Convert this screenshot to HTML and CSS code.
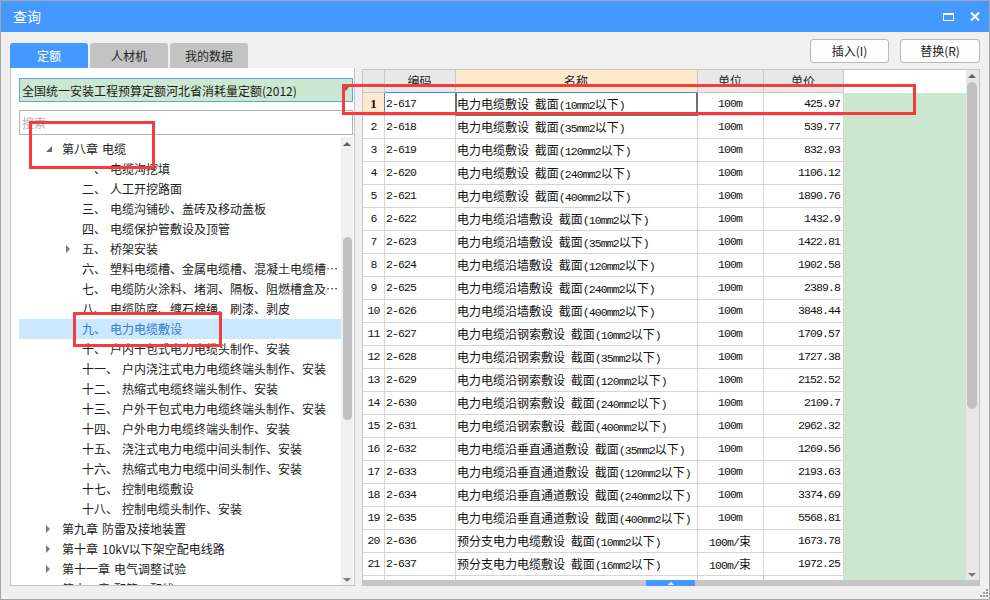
FILE: index.html
```html
<!DOCTYPE html>
<html lang="zh">
<head>
<meta charset="utf-8">
<title>查询</title>
<link rel="stylesheet" href="styles.css">
</head>
<body>
<div class="win">
  <div class="titlebar">
    <span class="title">查询</span>
    <svg class="tb-max" width="11" height="8" viewBox="0 0 11 8"><rect x="0" y="0" width="11" height="2" fill="#fff"/><rect x="0.5" y="1.5" width="10" height="6" fill="none" stroke="#fff" stroke-width="1"/></svg>
    <svg class="tb-close" width="10" height="9" viewBox="0 0 10 9"><path d="M1 0.5 L9 8.5 M9 0.5 L1 8.5" stroke="#fff" stroke-width="2" fill="none"/></svg>
  </div>

  <div class="toolbar">
    <div class="tabs">
      <div class="tab on">定额</div>
      <div class="tab">人材机</div>
      <div class="tab">我的数据</div>
    </div>
    <div class="btns">
      <div class="btn">插入(I)</div>
      <div class="btn wide">替换(R)</div>
    </div>
  </div>

  <div class="main">
    <div class="left">
      <div class="dropdown"><span>全国统一安装工程预算定额河北省消耗量定额(2012)</span><i class="dd-arrow"></i></div>
      <div class="search">搜索</div>
      <div class="tree-wrap">
        <div class="tree">
          <div class="row l1"><i class="tg open"></i>第八章 电缆</div>
          <div class="row l2"><i class="tg"></i>一、 电缆沟挖填</div>
          <div class="row l2"><i class="tg"></i>二、 人工开挖路面</div>
          <div class="row l2"><i class="tg"></i>三、 电缆沟铺砂、盖砖及移动盖板</div>
          <div class="row l2"><i class="tg"></i>四、 电缆保护管敷设及顶管</div>
          <div class="row l2"><i class="tg closed"></i>五、 桥架安装</div>
          <div class="row l2"><i class="tg"></i>六、 塑料电缆槽、金属电缆槽、混凝土电缆槽安装</div>
          <div class="row l2"><i class="tg"></i>七、 电缆防火涂料、堵洞、隔板、阻燃槽盒及防火包安装</div>
          <div class="row l2"><i class="tg"></i>八、 电缆防腐、缠石棉绳、刷漆、剥皮</div>
          <div class="row l2 sel"><i class="tg"></i>九、 电力电缆敷设</div>
          <div class="row l2"><i class="tg"></i>十、 户内干包式电力电缆头制作、安装</div>
          <div class="row l2"><i class="tg"></i>十一、 户内浇注式电力电缆终端头制作、安装</div>
          <div class="row l2"><i class="tg"></i>十二、 热缩式电缆终端头制作、安装</div>
          <div class="row l2"><i class="tg"></i>十三、 户外干包式电力电缆终端头制作、安装</div>
          <div class="row l2"><i class="tg"></i>十四、 户外电力电缆终端头制作、安装</div>
          <div class="row l2"><i class="tg"></i>十五、 浇注式电力电缆中间头制作、安装</div>
          <div class="row l2"><i class="tg"></i>十六、 热缩式电力电缆中间头制作、安装</div>
          <div class="row l2"><i class="tg"></i>十七、 控制电缆敷设</div>
          <div class="row l2"><i class="tg"></i>十八、 控制电缆头制作、安装</div>
          <div class="row l1"><i class="tg closed"></i>第九章 防雷及接地装置</div>
          <div class="row l1"><i class="tg closed"></i>第十章 10kV以下架空配电线路</div>
          <div class="row l1"><i class="tg closed"></i>第十一章 电气调整试验</div>
          <div class="row l1"><i class="tg closed"></i>第十二章 配管、配线</div>
        </div>
        <div class="lscroll">
          <i class="sa up"></i>
          <div class="lthumb"></div>
          <i class="sa down"></i>
        </div>
      </div>
    </div>

    <div class="right">
      <div class="gridarea">
        <div class="table">
          <div class="c h"></div>
          <div class="c h b">编码</div>
          <div class="c h nm b">名称</div>
          <div class="c h">单位</div>
          <div class="c h">单价</div>

          <div class="c num cur">1</div><div class="c code curc">2-617</div><div class="c nm curn">电力电缆敷设 截面<span class="m">(10mm2</span>以下<span class="m">)</span></div><div class="c unit">100m</div><div class="c price">425.97</div>
          <div class="c num">2</div><div class="c code">2-618</div><div class="c nm">电力电缆敷设 截面<span class="m">(35mm2</span>以下<span class="m">)</span></div><div class="c unit">100m</div><div class="c price">539.77</div>
          <div class="c num">3</div><div class="c code">2-619</div><div class="c nm">电力电缆敷设 截面<span class="m">(120mm2</span>以下<span class="m">)</span></div><div class="c unit">100m</div><div class="c price">832.93</div>
          <div class="c num">4</div><div class="c code">2-620</div><div class="c nm">电力电缆敷设 截面<span class="m">(240mm2</span>以下<span class="m">)</span></div><div class="c unit">100m</div><div class="c price">1106.12</div>
          <div class="c num">5</div><div class="c code">2-621</div><div class="c nm">电力电缆敷设 截面<span class="m">(400mm2</span>以下<span class="m">)</span></div><div class="c unit">100m</div><div class="c price">1890.76</div>
          <div class="c num">6</div><div class="c code">2-622</div><div class="c nm">电力电缆沿墙敷设 截面<span class="m">(10mm2</span>以下<span class="m">)</span></div><div class="c unit">100m</div><div class="c price">1432.9</div>
          <div class="c num">7</div><div class="c code">2-623</div><div class="c nm">电力电缆沿墙敷设 截面<span class="m">(35mm2</span>以下<span class="m">)</span></div><div class="c unit">100m</div><div class="c price">1422.81</div>
          <div class="c num">8</div><div class="c code">2-624</div><div class="c nm">电力电缆沿墙敷设 截面<span class="m">(120mm2</span>以下<span class="m">)</span></div><div class="c unit">100m</div><div class="c price">1902.58</div>
          <div class="c num">9</div><div class="c code">2-625</div><div class="c nm">电力电缆沿墙敷设 截面<span class="m">(240mm2</span>以下<span class="m">)</span></div><div class="c unit">100m</div><div class="c price">2389.8</div>
          <div class="c num">10</div><div class="c code">2-626</div><div class="c nm">电力电缆沿墙敷设 截面<span class="m">(400mm2</span>以下<span class="m">)</span></div><div class="c unit">100m</div><div class="c price">3848.44</div>
          <div class="c num">11</div><div class="c code">2-627</div><div class="c nm">电力电缆沿钢索敷设 截面<span class="m">(10mm2</span>以下<span class="m">)</span></div><div class="c unit">100m</div><div class="c price">1709.57</div>
          <div class="c num">12</div><div class="c code">2-628</div><div class="c nm">电力电缆沿钢索敷设 截面<span class="m">(35mm2</span>以下<span class="m">)</span></div><div class="c unit">100m</div><div class="c price">1727.38</div>
          <div class="c num">13</div><div class="c code">2-629</div><div class="c nm">电力电缆沿钢索敷设 截面<span class="m">(120mm2</span>以下<span class="m">)</span></div><div class="c unit">100m</div><div class="c price">2152.52</div>
          <div class="c num">14</div><div class="c code">2-630</div><div class="c nm">电力电缆沿钢索敷设 截面<span class="m">(240mm2</span>以下<span class="m">)</span></div><div class="c unit">100m</div><div class="c price">2109.7</div>
          <div class="c num">15</div><div class="c code">2-631</div><div class="c nm">电力电缆沿钢索敷设 截面<span class="m">(400mm2</span>以下<span class="m">)</span></div><div class="c unit">100m</div><div class="c price">2962.32</div>
          <div class="c num">16</div><div class="c code">2-632</div><div class="c nm">电力电缆沿垂直通道敷设 截面<span class="m">(35mm2</span>以下<span class="m">)</span></div><div class="c unit">100m</div><div class="c price">1269.56</div>
          <div class="c num">17</div><div class="c code">2-633</div><div class="c nm">电力电缆沿垂直通道敷设 截面<span class="m">(120mm2</span>以下<span class="m">)</span></div><div class="c unit">100m</div><div class="c price">2193.63</div>
          <div class="c num">18</div><div class="c code">2-634</div><div class="c nm">电力电缆沿垂直通道敷设 截面<span class="m">(240mm2</span>以下<span class="m">)</span></div><div class="c unit">100m</div><div class="c price">3374.69</div>
          <div class="c num">19</div><div class="c code">2-635</div><div class="c nm">电力电缆沿垂直通道敷设 截面<span class="m">(400mm2</span>以下<span class="m">)</span></div><div class="c unit">100m</div><div class="c price">5568.81</div>
          <div class="c num">20</div><div class="c code">2-636</div><div class="c nm">预分支电力电缆敷设 截面<span class="m">(10mm2</span>以下<span class="m">)</span></div><div class="c unit">100m/<span class="zh">束</span></div><div class="c price">1673.78</div>
          <div class="c num">21</div><div class="c code">2-637</div><div class="c nm">预分支电力电缆敷设 截面<span class="m">(16mm2</span>以下<span class="m">)</span></div><div class="c unit">100m/<span class="zh">束</span></div><div class="c price">1972.25</div>
          <div class="c num"></div><div class="c code"></div><div class="c nm"></div><div class="c unit"></div><div class="c price"></div>
        </div>
        <div class="filler"><div class="fh"></div><div class="fg"></div></div>
        <div class="vs">
          <i class="sa up"></i>
          <div class="vthumb"></div>
          <i class="sa down"></i>
        </div>
      </div>
      <div class="hs"><div class="hthumb"><i class="hup"></i></div></div>
    </div>
  </div>

  <div class="ann a1"></div>
  <div class="ann a2"></div>
  <div class="ann a3"></div>
  <svg class="grip" width="10" height="10" viewBox="0 0 10 10"><g fill="#9a9a9a"><rect x="7" y="1" width="2" height="2"/><rect x="4" y="4" width="2" height="2"/><rect x="7" y="4" width="2" height="2"/><rect x="1" y="7" width="2" height="2"/><rect x="4" y="7" width="2" height="2"/><rect x="7" y="7" width="2" height="2"/></g></svg>
</div>
</body>
</html>
```

FILE: styles.css
```css
* { box-sizing: border-box; margin: 0; padding: 0; }
html, body { width: 990px; height: 600px; overflow: hidden; background: #f0f0f0; }
body { font-family: "Noto Sans CJK SC", "Microsoft YaHei", sans-serif; font-size: 12px; color: #1f1f1f; }

.win { position: relative; width: 990px; height: 600px; border: 1px solid #a6a6a6; background: #f0f0f0; display: flex; flex-direction: column; }

/* title bar */
.titlebar { flex: none; height: 31px; background: #4399ff; color: #fff; display: flex; align-items: center; padding: 0 9px 0 12px; }
.title { flex: 1; font-size: 14px; line-height: 31px; }
.tb-max { display: block; }
.tb-close { display: block; margin-left: 16px; }

/* toolbar */
.toolbar { flex: none; height: 36px; display: flex; justify-content: space-between; padding: 0 9px; }
.tabs { display: flex; align-items: flex-end; gap: 2px; }
.tab { width: 78px; height: 25px; line-height: 25px; text-align: center; background: #c3c3c3; color: #262626; border-radius: 3px 3px 0 0; font-size: 12px; }
.tab.on { background: #4399ff; color: #fff; }
.btns { display: flex; gap: 11px; padding-top: 7px; }
.btn { width: 79px; height: 24px; line-height: 22px; border: 1px solid #b9b9b9; border-radius: 3px; background: #fdfdfd; text-align: center; color: #222; font-size: 12px; }
.btn.wide { width: 80px; }

/* main */
.main { flex: none; height: 518px; display: flex; gap: 7px; padding: 0 9px; }

.left { width: 345px; flex: none; background: #fff; border-left: 1px solid #c4c4c4; border-right: 1px solid #c4c4c4; border-bottom: 1px solid #c4c4c4; display: flex; flex-direction: column; padding: 10px 1px 0 8px; }
.dropdown { flex: none; height: 24px; width: 334px; background: #cde8d0; border: 1px solid #5aa2f2; display: flex; align-items: center; justify-content: space-between; padding: 0 3px 0 2px; font-size: 12px; color: #1a1a1a; }
.dd-arrow { width: 0; height: 0; border-left: 3px solid transparent; border-right: 3px solid transparent; border-top: 4px solid #6e6e6e; margin-bottom: 3px; }
.search { flex: none; margin-top: 8px; height: 25px; width: 334px; border: 1px solid #b4b4b4; line-height: 23px; padding-left: 2px; color: #b0b0b0; font-size: 12px; }

.tree-wrap { flex: 1; min-height: 0; display: flex; margin-top: 2px; }
.tree { flex: 1; min-width: 0; overflow: hidden; padding-top: 2px; }
.row { height: 20px; line-height: 20px; white-space: nowrap; overflow: hidden; text-overflow: ellipsis; padding-right: 0; color: #1c1c1c; font-size: 12px; word-spacing: 1.3px; }
.l1 { padding-left: 27px; }
.l2 { padding-left: 47px; }
.row.sel { background: #cce8ff; color: #2f7ad6; }
.tg { display: inline-block; width: 16px; height: 20px; vertical-align: top; position: relative; }
.tg.open::before { content: ""; position: absolute; left: 0; top: 7px; border-style: solid; border-width: 0 0 6px 6px; border-color: transparent transparent #6e6e6e transparent; }
.tg.closed::before { content: ""; position: absolute; left: 0; top: 6px; border-style: solid; border-width: 4px 0 4px 4px; border-color: transparent transparent transparent #7c7c7c; }

.lscroll { flex: none; width: 12px; background: #f0f0f0; display: flex; flex-direction: column; align-items: center; padding: 5px 0 3px; }
.sa { display: block; width: 0; height: 0; border-left: 4px solid transparent; border-right: 4px solid transparent; }
.sa.up { border-bottom: 4px solid #606060; }
.sa.down { border-top: 4px solid #7a7a7a; margin-top: auto; }
.lthumb { margin-top: 91px; width: 9px; height: 183px; border-radius: 5px; background: #c2c2c2; }

/* right grid */
.right { width: 618px; flex: none; margin-top: 1px; border: 1px solid #c4c4c4; border-bottom: none; display: flex; flex-direction: column; background: #fff; }
.gridarea { height: 510px; display: flex; overflow: hidden; }
.table { width: 481px; flex: none; display: grid; grid-template-columns: 22px 71px 242px 66px 80px; grid-auto-rows: 23px; align-content: start; overflow: hidden; }
.c { border-right: 1px solid #d5d5d5; border-bottom: 1px solid #d5d5d5; line-height: 22px; white-space: nowrap; overflow: hidden; padding: 0 2px 0 1px; font-family: "Liberation Mono", "Noto Sans CJK SC", monospace; font-size: 11.5px; letter-spacing: -0.9px; color: #111; }
.c.h { background: #e8e8e8; border-color: #c8c8c8; text-align: center; font-family: "Noto Sans CJK SC", sans-serif; font-size: 12px; letter-spacing: 0; color: #222; }
.c.h.nm { background: #fde9ce; }
.c.h.b { border-bottom-color: #3b8fe8; }
.c.nm { font-family: "Noto Sans CJK SC", sans-serif; font-size: 12px; letter-spacing: 0; padding-left: 1px; word-spacing: 3px; }
.m { font-family: "Liberation Mono", monospace; font-size: 11.5px; letter-spacing: -0.9px; word-spacing: 0; }
.zh { font-family: "Noto Sans CJK SC", sans-serif; font-size: 12px; letter-spacing: 0; }
.num { text-align: center; padding: 0; }
.num.cur { background: #fde9ce; font-weight: bold; font-family: "Liberation Serif", serif; font-size: 13px; letter-spacing: 0; border-right-color: #3b8fe8; }
.curc { border-right-color: #707070; }
.curn { border-right-color: #707070; border-bottom-color: #707070; box-shadow: inset 1px 0 0 #707070, inset -1px 0 0 #707070; }
.unit { text-align: center; }
.price { text-align: right; padding-right: 3px; }

.filler { width: 122px; flex: none; display: flex; flex-direction: column; }
.fh { height: 23px; background: #fff; }
.fg { flex: 1; background: #cde6d0; }

.vs { width: 13px; flex: none; background: #e8e8e8; display: flex; flex-direction: column; align-items: center; padding: 4px 1px 3px 0; }
.vthumb { margin-top: 4px; width: 10px; height: 327px; border-radius: 5px; background: #c0c0c0; }

.hs { height: 6px; background: #c6c6c6; padding-left: 283px; }
.hthumb { width: 49px; height: 6px; background: #4399ff; display: flex; align-items: center; justify-content: center; }
.hup { display: block; width: 0; height: 0; border-left: 3px solid transparent; border-right: 3px solid transparent; border-bottom: 3px solid #fff; }

/* annotations */
.ann { position: absolute; border: 3px solid #f43c3c; }
.a1 { left: 28px; top: 120px; width: 126px; height: 48px; }
.a2 { left: 72px; top: 311px; width: 149px; height: 35px; }
.a3 { left: 341px; top: 83px; width: 574px; height: 31px; }
.grip { position: absolute; right: 0; bottom: 1px; }
```
